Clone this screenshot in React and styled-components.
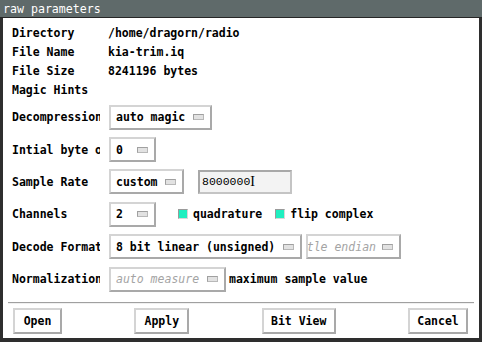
import React from 'react';
import styled, { createGlobalStyle, css } from 'styled-components';

const GlobalStyle = createGlobalStyle`
  html, body { margin: 0; padding: 0; background: #2e2e2e; }
  body { font-family: "DejaVu Sans Mono", "Liberation Mono", monospace; }
`;

const Window = styled.div`
  width: 482px;
  height: 342px;
  box-sizing: border-box;
  border: 3px solid #2e2e2e;
  border-top: 0;
  border-bottom-width: 4px;
  background: #ffffff;
  display: flex;
  flex-direction: column;
`;

const TitleBar = styled.div`
  height: 17px;
  margin: 0 -3px;
  padding-left: 3px;
  background: #5f6a6a;
  border-bottom: 1px solid #262626;
  color: #ffffff;
  font-size: 11.6px;
  line-height: 18px;
  display: flex;
  align-items: center;
`;

const Body = styled.div`
  padding: 5px 0 0 9px;
  display: flex;
  flex-direction: column;
`;

const InfoRow = styled.div`
  height: 19px;
  display: flex;
  align-items: center;
  font-weight: bold;
  font-size: 11.5px;
  color: #000;
`;

const Label = styled.div`
  width: 88px;
  flex: none;
  overflow: hidden;
  white-space: nowrap;
  font-weight: bold;
  font-size: 11.5px;
`;

const Value = styled.div`
  margin-left: 8px;
  white-space: nowrap;
`;

const ControlRow = styled.div`
  height: 32.4px;
  display: flex;
  align-items: center;
  margin-top: ${p => p.$first ? '2px' : '0'};
`;

const Controls = styled.div`
  margin-left: 9px;
  display: flex;
  align-items: center;
`;

const bevel = css`
  box-sizing: border-box;
  border: 2px solid;
  border-color: #d4d4d4 #a9a9a9 #a9a9a9 #d4d4d4;
  background: #ffffff;
`;

const Menu = styled.div`
  ${bevel};
  width: ${p => p.$w}px;
  height: 25px;
  padding: 0 6px 0 5px;
  display: flex;
  align-items: center;
  justify-content: ${p => p.$clip ? 'flex-end' : 'space-between'};
  gap: 6px;
  overflow: hidden;
  white-space: nowrap;
  font-size: 11.5px;
  font-weight: bold;
  margin-right: ${p => p.$mr || 0}px;
  ${p => p.$disabled && css`
    color: #a4a4a4;
    font-weight: normal;
    font-style: italic;
  `}
`;

const MenuText = styled.span`
  flex: none;
`;

const Indicator = styled.span`
  flex: none;
  width: 11px;
  height: 6px;
  box-sizing: border-box;
  border: 1px solid;
  border-color: #a0a0a0 #b8b8b8 #b8b8b8 #a0a0a0;
  background: #e2e2e2;
`;

const Entry = styled.div`
  margin-left: 14px;
  width: 94px;
  height: 24px;
  box-sizing: border-box;
  border: 2px solid;
  border-color: #a8a8a8 #c4c4c4 #c4c4c4 #a8a8a8;
  background: #f3f3f3;
  padding-left: 2px;
  display: flex;
  align-items: center;
  font-family: "Liberation Mono", monospace;
  font-size: 11.5px;
  color: #000;
`;

const Caret = styled.span`
  font-family: "Liberation Serif", serif;
  font-size: 14px;
  line-height: 1;
`;

const Check = styled.span`
  width: 10px;
  height: 10px;
  box-sizing: border-box;
  border: 1px solid;
  border-color: #9a9a9a #d8d8d8 #d8d8d8 #9a9a9a;
  background: #1fefc0;
  margin: 0 5px 0 ${p => p.$ml}px;
`;

const CheckText = styled.span`
  font-weight: bold;
  font-size: 11.5px;
`;

const After = styled.span`
  margin-left: 3px;
  font-weight: bold;
  font-size: 11.5px;
`;

const Separator = styled.div`
  margin: 7px 5px 0 -4px;
  border-top: 1px solid #a0a0a0;
  border-bottom: 1px solid #f0f0f0;
`;

const Footer = styled.div`
  display: flex;
  justify-content: space-between;
  padding: 4px 11px 0 10px;
`;

const Button = styled.button`
  ${bevel};
  width: ${p => p.$w}px;
  height: 26px;
  padding: 0;
  font-family: "DejaVu Sans Mono", "Liberation Mono", monospace;
  font-weight: bold;
  font-size: 11.5px;
  color: #000;
  cursor: pointer;
`;

export default function App() {
  return (
    <>
      <GlobalStyle />
      <Window>
        <TitleBar>raw parameters</TitleBar>
        <Body>
          <InfoRow><Label>Directory</Label><Value>/home/dragorn/radio</Value></InfoRow>
          <InfoRow><Label>File Name</Label><Value>kia-trim.iq</Value></InfoRow>
          <InfoRow><Label>File Size</Label><Value>8241196 bytes</Value></InfoRow>
          <InfoRow><Label>Magic Hints</Label></InfoRow>

          <ControlRow $first>
            <Label>Decompression</Label>
            <Controls>
              <Menu $w={103}><MenuText>auto magic</MenuText><Indicator /></Menu>
            </Controls>
          </ControlRow>
          <ControlRow>
            <Label>Intial byte offset</Label>
            <Controls>
              <Menu $w={47}><MenuText>0</MenuText><Indicator /></Menu>
            </Controls>
          </ControlRow>
          <ControlRow>
            <Label>Sample Rate</Label>
            <Controls>
              <Menu $w={75}><MenuText>custom</MenuText><Indicator /></Menu>
              <Entry>8000000<Caret>I</Caret></Entry>
            </Controls>
          </ControlRow>
          <ControlRow>
            <Label>Channels</Label>
            <Controls>
              <Menu $w={47}><MenuText>2</MenuText><Indicator /></Menu>
              <Check $ml={22} />
              <CheckText>quadrature</CheckText>
              <Check $ml={13} />
              <CheckText>flip complex</CheckText>
            </Controls>
          </ControlRow>
          <ControlRow>
            <Label>Decode Format</Label>
            <Controls>
              <Menu $w={193} $mr={4}><MenuText>8 bit linear (unsigned)</MenuText><Indicator /></Menu>
              <Menu $w={95} $disabled $clip><MenuText>little endian</MenuText><Indicator /></Menu>
            </Controls>
          </ControlRow>
          <ControlRow>
            <Label>Normalization</Label>
            <Controls>
              <Menu $w={117} $disabled><MenuText>auto measure</MenuText><Indicator /></Menu>
              <After>maximum sample value</After>
            </Controls>
          </ControlRow>

          <Separator />
        </Body>
        <Footer>
          <Button $w={49}>Open</Button>
          <Button $w={55}>Apply</Button>
          <Button $w={74}>Bit View</Button>
          <Button $w={60}>Cancel</Button>
        </Footer>
      </Window>
    </>
  );
}
